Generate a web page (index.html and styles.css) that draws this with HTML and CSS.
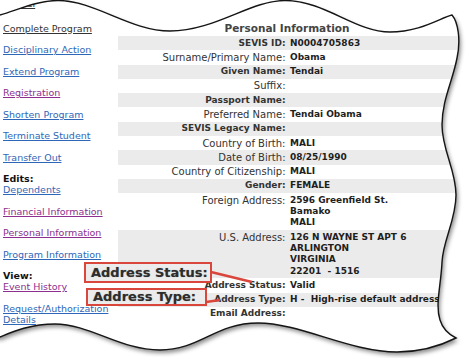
FILE: index.html
```html
<!DOCTYPE html>
<html lang="en">
<head>
<meta charset="utf-8">
<title>Personal Information</title>
<link rel="stylesheet" href="styles.css">
</head>
<body>
<div class="stage">
  <svg class="paper-shadow" width="474" height="358" viewBox="0 0 474 358">
    <path d="M0,15 C20,9 38,0.5 58,0.5 C95,0.5 130,31 170,31 C215,31 250,0.5 285,0.5 C325,0.5 355,32 390,32 C420,32 440,18 452,15 C458,22 461,40 457,58 C453,80 442,100 442,125 C442,150 456,170 456,195 C456,220 443,240 442,262 C441,285 435,305 440,320 C443,330 450,335 456,338 C440,346 420,352 397,352 C350,352 300,323 258,323 C215,323 200,350 160,350 C120,350 90,324 55,324 C30,324 12,332 0,337 L-6,337 L-6,15 Z" fill="#ffffff"/>
  </svg>

  <div class="sheet">
    <nav class="nav">
      <a class="lk dark first" href="#">Cancel</a>
      <a class="lk dark" href="#">Complete Program</a>
      <a class="lk blue" href="#">Disciplinary Action</a>
      <a class="lk blue" href="#">Extend Program</a>
      <a class="lk purple" href="#">Registration</a>
      <a class="lk blue" href="#">Shorten Program</a>
      <a class="lk blue" href="#">Terminate Student</a>
      <a class="lk blue" href="#">Transfer Out</a>
      <div class="grp"><span class="grp-title">Edits:</span><a class="lk blue" href="#">Dependents</a></div>
      <a class="lk purple" href="#">Financial Information</a>
      <a class="lk purple" href="#">Personal Information</a>
      <a class="lk blue" href="#">Program Information</a>
      <div class="grp"><span class="grp-title">View:</span><a class="lk purple" href="#">Event History</a></div>
      <div class="grp"><a class="lk blue" href="#">Request/Authorization<br>Details</a></div>
    </nav>

    <main class="info">
      <h1 class="title">Personal Information</h1>
      <div class="rows">
        <div class="row shade"><span class="lbl strong">SEVIS ID:</span><span class="val">N0004705863</span></div>
        <div class="row"><span class="lbl">Surname/Primary Name:</span><span class="val">Obama</span></div>
        <div class="row shade"><span class="lbl strong">Given Name:</span><span class="val">Tendai</span></div>
        <div class="row"><span class="lbl">Suffix:</span><span class="val"></span></div>
        <div class="row shade"><span class="lbl strong">Passport Name:</span><span class="val"></span></div>
        <div class="row"><span class="lbl">Preferred Name:</span><span class="val">Tendai Obama</span></div>
        <div class="row shade"><span class="lbl strong">SEVIS Legacy Name:</span><span class="val"></span></div>
        <div class="row"><span class="lbl">Country of Birth:</span><span class="val">MALI</span></div>
        <div class="row shade"><span class="lbl">Date of Birth:</span><span class="val">08/25/1990</span></div>
        <div class="row"><span class="lbl">Country of Citizenship:</span><span class="val">MALI</span></div>
        <div class="row shade"><span class="lbl strong">Gender:</span><span class="val">FEMALE</span></div>
        <div class="row"><span class="lbl">Foreign Address:</span><span class="val">2596 Greenfield St.
Bamako
MALI</span></div>
        <div class="row shade"><span class="lbl">U.S. Address:</span><span class="val">126 N WAYNE ST APT 6
ARLINGTON
VIRGINIA
22201  - 1516</span></div>
        <div class="row"><span class="lbl strong">Address Status:</span><span class="val">Valid</span></div>
        <div class="row shade"><span class="lbl strong">Address Type:</span><span class="val">H -  High-rise default address</span></div>
        <div class="row"><span class="lbl strong">Email Address:</span><span class="val"></span></div>
      </div>
    </main>
  </div>

  <svg class="paper-edge" width="474" height="358" viewBox="0 0 474 358">
    <path d="M0,15 C20,9 38,0.5 58,0.5 C95,0.5 130,31 170,31 C215,31 250,0.5 285,0.5 C325,0.5 355,32 390,32 C420,32 440,18 452,15 C458,22 461,40 457,58 C453,80 442,100 442,125 C442,150 456,170 456,195 C456,220 443,240 442,262 C441,285 435,305 440,320 C443,330 450,335 456,338 C440,346 420,352 397,352 C350,352 300,323 258,323 C215,323 200,350 160,350 C120,350 90,324 55,324 C30,324 12,332 0,337" fill="none" stroke="#151515" stroke-width="1.4"/>
  </svg>

  <svg class="pointers" width="474" height="358" viewBox="0 0 474 358">
    <line x1="211" y1="272" x2="252" y2="282" stroke="#d9463c" stroke-width="2.6"/>
    <line x1="206" y1="302" x2="220" y2="300" stroke="#d9463c" stroke-width="2.6"/>
  </svg>

  <div class="callout c1">Address Status:</div>
  <div class="callout c2">Address Type:</div>
</div>
</body>
</html>
```

FILE: styles.css
```css
* { box-sizing: border-box; }

html, body {
  margin: 0;
  padding: 0;
  background: #ffffff;
}

body {
  width: 474px;
  height: 358px;
  overflow: hidden;
  font-family: "DejaVu Sans", Verdana, sans-serif;
  color: #333;
}

.stage {
  position: relative;
  width: 474px;
  height: 358px;
}

.paper-shadow,
.paper-edge,
.pointers {
  position: absolute;
  left: 0;
  top: 0;
  overflow: visible;
}

.paper-shadow {
  z-index: 0;
  filter: drop-shadow(2px 3px 2px rgba(0, 0, 0, 0.45));
}

.paper-edge,
.pointers {
  z-index: 2;
  pointer-events: none;
}

.sheet {
  position: relative;
  z-index: 1;
  height: 358px;
  display: grid;
  grid-template-columns: 118px 1fr;
  clip-path: path('M0,15 C20,9 38,0.5 58,0.5 C95,0.5 130,31 170,31 C215,31 250,0.5 285,0.5 C325,0.5 355,32 390,32 C420,32 440,18 452,15 C458,22 461,40 457,58 C453,80 442,100 442,125 C442,150 456,170 456,195 C456,220 443,240 442,262 C441,285 435,305 440,320 C443,330 450,335 456,338 C440,346 420,352 397,352 C350,352 300,323 258,323 C215,323 200,350 160,350 C120,350 90,324 55,324 C30,324 12,332 0,337 L-6,337 L-6,15 Z');
}

/* left navigation */
.nav {
  display: flex;
  flex-direction: column;
  align-items: flex-start;
  gap: 10.5px;
  padding: 0 0 0 3px;
  font-size: 9.5px;
  line-height: 11px;
}

.nav .first {
  margin-top: -2px;
  margin-bottom: 3px;
}

.grp {
  display: flex;
  flex-direction: column;
  align-items: flex-start;
}

.grp-title {
  font-weight: bold;
  color: #111;
}

.lk { text-decoration: underline; }
.dark { color: #333333; }
.blue { color: #2f67b8; }
.purple { color: #8c2f8e; }

/* information table */
.info {
  padding-top: 21px;
}

.title {
  margin: 0;
  padding-right: 18px;
  font-size: 10.5px;
  line-height: 15px;
  font-weight: bold;
  text-align: center;
  color: #444;
}

.row {
  display: grid;
  grid-template-columns: 169px 1fr;
  padding: 1.5px 0;
  line-height: 11.3px;
}

.shade { background: #ebebeb; }

.lbl {
  text-align: right;
  font-size: 10px;
  color: #333;
  padding-right: 1.5px;
  white-space: nowrap;
}

.lbl.strong {
  font-weight: bold;
  font-size: 9px;
}

.val {
  font-size: 9px;
  font-weight: bold;
  color: #1e1e1e;
  white-space: pre;
  padding-left: 3px;
}

/* callouts */
.callout {
  position: absolute;
  z-index: 3;
  border: 2px solid #d9463c;
  background: #ececec;
  font-size: 13px;
  font-weight: bold;
  color: #2d2d2d;
  padding: 0 0 0 5px;
  white-space: nowrap;
  text-shadow: 0 0 1px rgba(0, 0, 0, 0.35);
}

.c1 {
  left: 84px;
  top: 262px;
  width: 128px;
  height: 21px;
  line-height: 17px;
}

.c2 {
  left: 86px;
  top: 288px;
  width: 121px;
  height: 18px;
  line-height: 14px;
}
```
